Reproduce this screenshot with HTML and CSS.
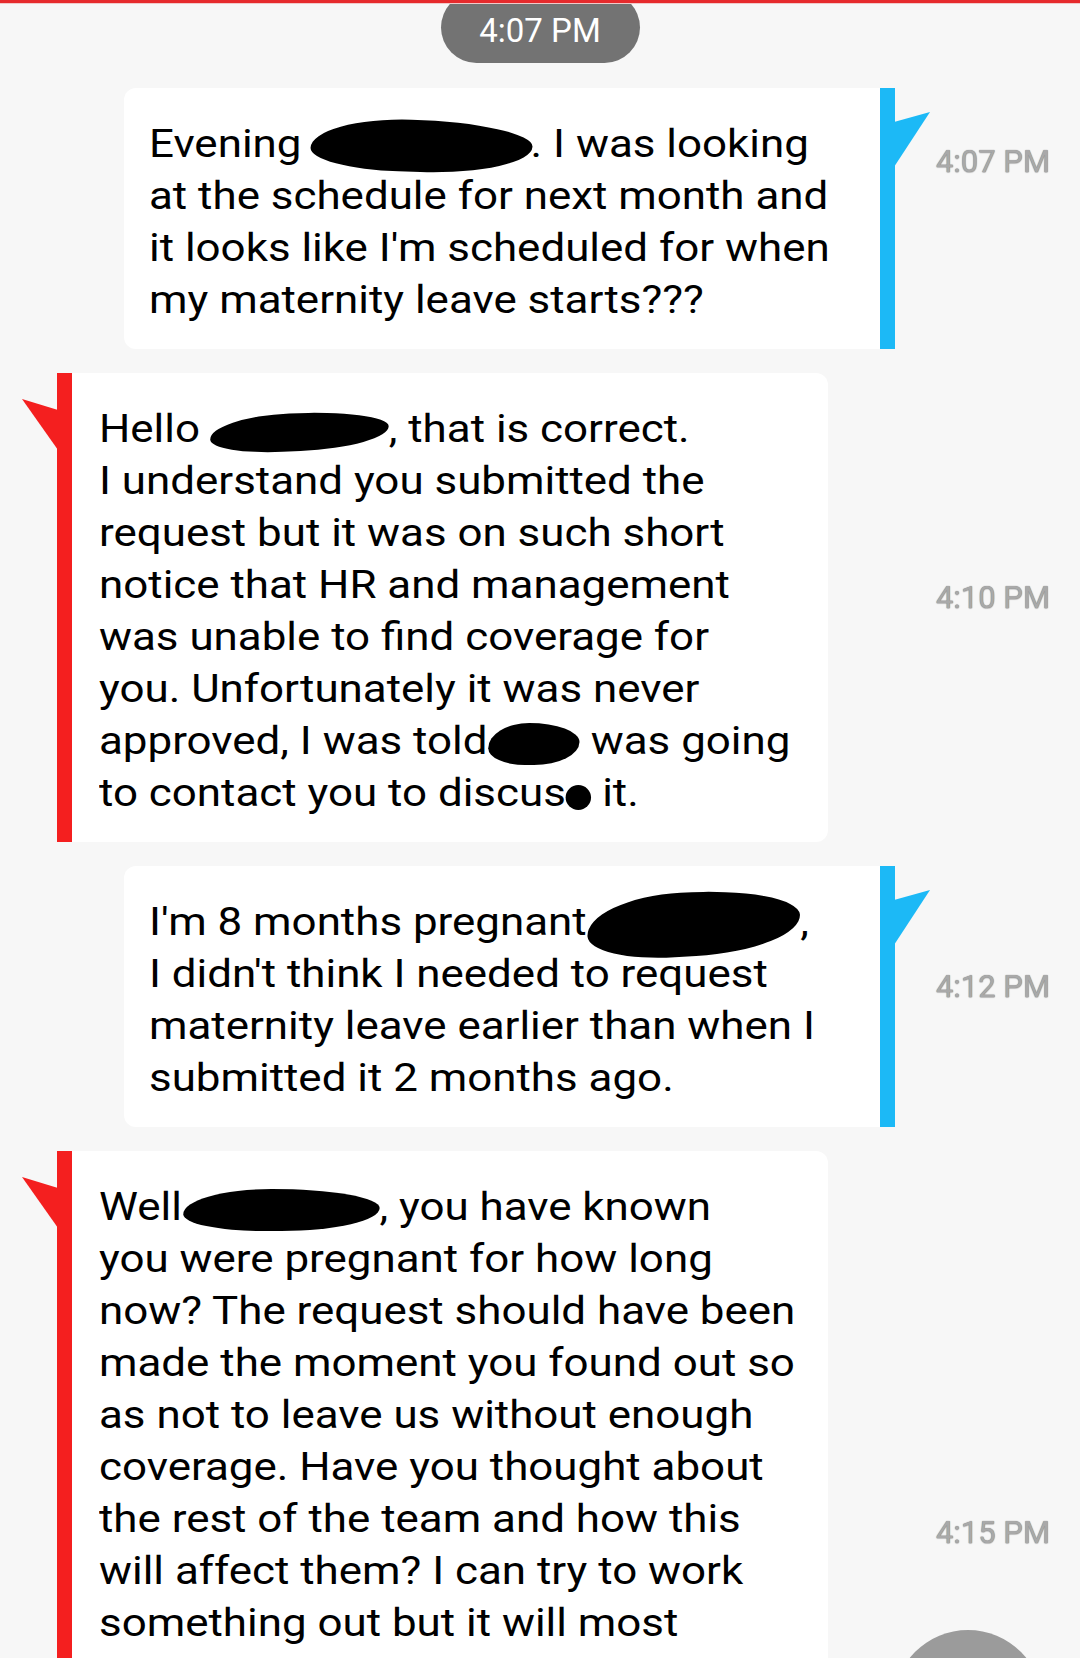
FILE: index.html
```html
<!DOCTYPE html>
<html lang="en">

<head>
    <meta charset="UTF-8">
    <meta name="viewport" content="width=device-width, initial-scale=1.0">
    <title>Messages</title>
    <link rel="stylesheet" href="styles.css">
</head>

<body>

    <div class="top-line"></div>

    <div class="day-stamp">
        <span class="pill">4:07 PM</span>
    </div>

    <section class="chat">
        <div class="row out">
            <div class="bubble">
                <p class="text">
                    Evening <span class="redact r-evening"></span>. I was looking<br>
                    at the schedule for next month and<br>
                    it looks like I'm scheduled for when<br>
                    my maternity leave starts???
                </p>
            </div>
            <div class="stamp early">4:07 PM</div>
        </div>

        <div class="row in">
            <div class="bubble">
                <p class="text">
                    Hello <span class="redact r-hello"></span>, that is correct.<br>
                    I understand you submitted the<br>
                    request but it was on such short<br>
                    notice that HR and management<br>
                    was unable to find coverage for<br>
                    you. Unfortunately it was never<br>
                    approved, I was told<span class="redact r-told"></span> was going<br>
                    to contact you to discus<span class="redact r-dot"></span> it.
                </p>
            </div>
            <div class="stamp">4:10 PM</div>
        </div>

        <div class="row out">
            <div class="bubble">
                <p class="text">
                    I'm 8 months pregnant<span class="redact r-preg"></span>,<br>
                    I didn't think I needed to request<br>
                    maternity leave earlier than when I<br>
                    submitted it 2 months ago.
                </p>
            </div>
            <div class="stamp">4:12 PM</div>
        </div>

        <div class="row in">
            <div class="bubble long">
                <p class="text">
                    Well<span class="redact r-well"></span>, you have known<br>
                    you were pregnant for how long<br>
                    now? The request should have been<br>
                    made the moment you found out so<br>
                    as not to leave us without enough<br>
                    coverage. Have you thought about<br>
                    the rest of the team and how this<br>
                    will affect them? I can try to work<br>
                    something out but it will most
                </p>
            </div>
            <div class="stamp late">4:15 PM</div>
        </div>
    </section>

    <div class="fab"></div>

</body>

</html>
```

FILE: styles.css
```css
* {
    box-sizing: border-box;
    margin: 0;
    padding: 0;
}

html,
body {
    background: #f7f7f7;
}

body {
    color: #000;
    font-family: Roboto, 'Noto Sans', sans-serif;
    overflow: hidden;
    height: 1658px;
}

.top-line {
    background: #e62a2c;
    border-bottom: 1px solid #f1c9c9;
    height: 4px;
}

.day-stamp {
    display: flex;
    height: 59px;
    justify-content: center;
    margin-bottom: 25px;
    overflow: hidden;
}

.pill {
    align-items: center;
    background: #737373;
    border-radius: 36px;
    color: #fff;
    display: flex;
    font-size: 33px;
    height: 71px;
    justify-content: center;
    margin-top: -12px;
    padding-top: 6px;
    width: 199px;
}

.chat {
    display: flex;
    flex-direction: column;
    gap: 24px;
}

.row {
    align-items: center;
    display: flex;
    padding-right: 30px;
}

.row.out {
    padding-left: 124px;
}

.row.in {
    padding-left: 57px;
}

.bubble {
    background: #fff;
    padding: 30px 20px 23px 25px;
    position: relative;
    width: 771px;
}

/* the screenshot is stretched sideways, so is the text */
.text {
    font-size: 38px;
    line-height: 52px;
    transform: scaleX(1.155);
    transform-origin: left top;
    white-space: nowrap;
}

.out .bubble {
    border-radius: 12px 0 0 12px;
    border-right: 15px solid #1cb9f6;
}

.in .bubble {
    border-left: 15px solid #f41f1f;
    border-radius: 0 12px 12px 0;
    padding-left: 27px;
}

.bubble.long {
    padding-bottom: 400px;
}

.out .bubble::after {
    background: #1cb9f6;
    clip-path: polygon(0 10px, 100% 0, 0 100%);
    content: "";
    height: 55px;
    position: absolute;
    right: -50px;
    top: 24px;
    width: 36px;
}

.in .bubble::before {
    background: #f41f1f;
    clip-path: polygon(0 0, 100% 11px, 100% 100%);
    content: "";
    height: 51px;
    left: -50px;
    position: absolute;
    top: 26px;
    width: 36px;
}

.stamp {
    color: #a9a9a9;
    font-size: 31px;
    line-height: 40px;
    margin-bottom: 20px;
    margin-left: auto;
    text-shadow: 0 0 1px #6f6f6f, 0 1px 1px rgba(0, 0, 0, 0.2);
    white-space: nowrap;
}

.stamp.early {
    align-self: flex-start;
    margin-top: 54px;
}

.stamp.late {
    align-self: flex-start;
    margin-top: 362px;
}

.redact {
    background: #000;
    border-radius: 45% 55% 50% 40% / 60% 45% 55% 40%;
    display: inline-block;
    vertical-align: middle;
}

.r-evening {
    height: 52px;
    margin: -12px -2px -10px -1px;
    transform: rotate(2deg);
    width: 192px;
}

.r-hello {
    height: 38px;
    margin-left: -1px;
    transform: rotate(-3deg);
    width: 155px;
}

.r-told {
    height: 42px;
    margin-left: 1px;
    width: 79px;
}

.r-dot {
    border-radius: 50%;
    height: 25px;
    margin-top: 4px;
    width: 22px;
}

.r-preg {
    height: 64px;
    margin: -12px 0 -10px;
    transform: rotate(-4deg);
    width: 185px;
}

.r-well {
    height: 42px;
    margin-left: 1px;
    width: 170px;
}

.fab {
    background: #9b9b9b;
    border-radius: 50%;
    height: 150px;
    left: 893px;
    position: fixed;
    top: 1630px;
    width: 150px;
}
```
